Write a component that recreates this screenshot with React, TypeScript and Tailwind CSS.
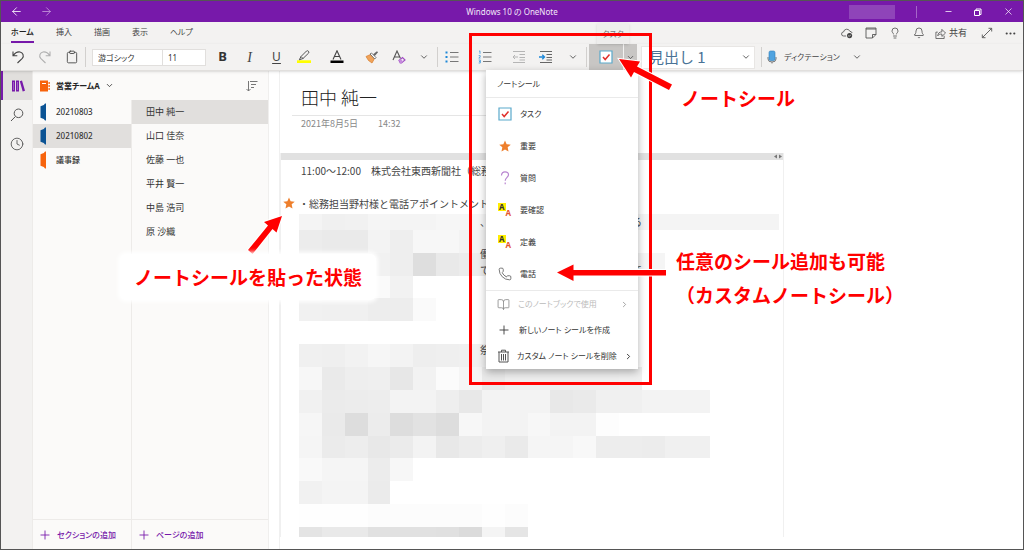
import React, { useState } from "react";
import {
  ArrowLeft,
  ArrowRight,
  Bell,
  BookOpen,
  ChevronDown,
  ChevronRight,
  Clipboard,
  Clock,
  Lightbulb,
  Minus,
  MoreHorizontal,
  Phone,
  Plus,
  X,
} from "lucide-react";

const TABS = ["ホーム", "挿入", "描画", "表示", "ヘルプ"];

const SECTIONS = [
  { name: "20210803", color: "text-[#0b5394]" },
  { name: "20210802", color: "text-[#0b5394]" },
  { name: "議事録", color: "text-[#f7630c]" },
];

const PAGES = ["田中 純一", "山口 佳奈", "佐藤 一也", "平井 賢一", "中島 浩司", "原 沙織"];

// Gray level of each mosaic cell, two hex digits per cell
const MOSAIC = [
  "f4 f0 f1 f5 f4 f4 f6 f6 f6 f6 f6 f6 f6 f6 f6 f4 f4 f4 f4 f4 f4",
  "ec ea ea f3 ee f7 f7 f3 f3",
  "f4 f4 f4 f1 ee de e9 ec ec ff ff ff ff ff f5 f5",
  "f6 f6 f6 fa f2",
  "f1 f0 f0 ed ed fa",
  "",
  "f0 ef f2 f6 f3 ee ef f0 f0",
  "f7 ea ee ef e7 f2 fb f5 e9 ee ee ee ee ee ef",
  "f1 eb ec ed f3 f3 ee e8 f3 f3 f3 e8 ea f0 f0 f3 f3 f3",
  "f6 ea dd ec dd e2 dd f7 f3 f3 f7 f3 f3 fd",
  "f5 eb ed e8 eb f3 e8 ec ef ea f5 f5 f8 ed ed ec f0 f0",
  "f9 f5 f5 ec f7",
  "f1 f4 f4 eb",
  "fe fe fe fc fc fc fc fc fe fc",
];
const STRIP = "e4 e9 e9 e1 e1 e1 e0 db f4 e5";
const CELL = 22.85;

function UndoIcon({ flip = false }: { flip?: boolean }) {
  return (
    <svg
      viewBox="0 0 14 14"
      className={flip ? "w-[14px] h-[14px] -scale-x-100" : "w-[14px] h-[14px]"}
      fill="none"
      stroke="currentColor"
      strokeWidth="1.1"
    >
      <path d="M2 1.5v4.3h4.3M2.2 5.6C4 3 6.5 1.6 9 2c3 .5 4.300 4 2.300 6.300L6.500 13" />
    </svg>
  );
}

function ListIcon({ numbered = false }: { numbered?: boolean }) {
  return (
    <svg viewBox="0 0 14 14" className="w-[14px] h-[14px]" fill="none">
      <path d="M5 2.500h8.500M5 7h8.500M5 11.500h8.500" stroke="#777" />
      {numbered ? (
        <path d="M1 1.500l1-.7v3M.7 5.600h1.500v1.200L.8 8h1.700M.7 10h1.600v3H.7M1 11.500h1.300" stroke="#4a9fe0" strokeWidth=".9" />
      ) : (
        <path d="M.5 1.500h2v2h-2zM.5 6h2v2h-2zM.5 10.500h2v2h-2z" fill="#1e88d8" />
      )}
    </svg>
  );
}

function IndentIcon({ out = false }: { out?: boolean }) {
  return (
    <svg viewBox="0 0 14 14" className="w-[14px] h-[14px]" fill="none">
      <path d="M1 1.500h12M7.500 4.500H13M7.500 7.500H13M7.500 10H13M1 12.500h12" stroke={out ? "#b5b5b5" : "#666"} />
      {out ? (
        <path d="M6 7H1M3 5L1 7l2 2" stroke="#b5b5b5" />
      ) : (
        <path d="M0 7h5.500M3.300 4.800L5.500 7 3.300 9.200" stroke="#1e88d8" strokeWidth="1.300" />
      )}
    </svg>
  );
}

function HighlighterIcon() {
  return (
    <svg viewBox="0 0 14 14" className="w-[14px] h-[14px]" fill="none">
      <path d="M0 10.300h14V13H0z" fill="#ff0" />
      <path d="M4 6.500L9.500 1q1-.7 1.900.2t.2 1.900L6 8.500 2.300 9.800zM4 6.500l2 2" stroke="#555" />
    </svg>
  );
}

function FontColorIcon() {
  return (
    <svg viewBox="0 0 14 14" className="w-[14px] h-[14px]" fill="none">
      <path d="M3 9.500L7 .8l4 8.700M4.500 6.500h5" stroke="#444" strokeWidth="1.100" />
      <path d="M.5 10.500h13V13H.5z" fill="#000" />
    </svg>
  );
}

function PainterIcon() {
  return (
    <svg viewBox="0 0 14 14" className="w-[14px] h-[14px]" fill="none">
      <path d="M1 6.500l4.500-2 4 4L7 13 3.500 10.500z" fill="#f0a35a" stroke="#d67c2c" strokeWidth=".7" />
      <path d="M5 4l1.500-1L11 7.500 9.700 9z" fill="#fff" stroke="#555" strokeWidth=".8" />
      <path d="M8 4.500l3.500-3q1.500-.5 1.300 1L9.800 6z" fill="#666" />
    </svg>
  );
}

function ClearFormatIcon() {
  return (
    <svg viewBox="0 0 14 14" className="w-[14px] h-[14px]" fill="none">
      <path d="M1 10L5 1l3.500 7.500M2.500 7H8" stroke="#555" strokeWidth="1.100" />
      <path d="M7 10.500l3.500-3L13 10l-3.500 3H8.300z" stroke="#a14fc4" strokeWidth="1.200" />
      <path d="M7 10.500l1.700-1.400 2.500 2.500L9.500 13H8.300z" fill="#c58add" />
    </svg>
  );
}

function TaskIcon() {
  return (
    <svg viewBox="0 0 14 14" className="w-[14px] h-[14px]" fill="none">
      <path d="M1 1h12v12H1z" fill="#fff" stroke="#5aa9cb" strokeWidth="1.200" />
      <path d="M4 7l2.200 2.500L10.500 4.500" stroke="#e0302c" strokeWidth="1.500" />
    </svg>
  );
}

function StarIcon() {
  return (
    <svg viewBox="0 0 14 14" className="w-3 h-3 shrink-0">
      <path d="M7 .5l1.900 4.400 4.800.5-3.600 3.200 1 4.800L7 11l-4.100 2.400 1-4.800L.3 5.400l4.800-.5z" fill="#ee7f2c" />
    </svg>
  );
}

function QuestionIcon() {
  return (
    <svg viewBox="0 0 14 14" className="w-[14px] h-[14px]" fill="none" stroke="#b884d0" strokeWidth="1.200">
      <path d="M3.500 4.500C3.500 2 5 .8 7 .8s3.500 1.200 3.500 3c0 2.500-3.300 2.700-3.300 6M7.200 11.500V13.200" />
    </svg>
  );
}

function MarkIcon() {
  return (
    <span aria-hidden="true" className="flex h-[14px] font-bold text-[8px] leading-[8px]">
      <span className="self-start bg-[#ffee00] text-[#333] px-px">A</span>
      <span className="self-end text-[#e4572e]">A</span>
    </span>
  );
}

function TrashIcon() {
  return (
    <svg viewBox="0 0 13 14" className="w-[13px] h-[14px] shrink-0" fill="none" stroke="#555">
      <path d="M1 3h11M4.500 3V1.200h4V3M2 3v10h9V3M4.500 5v6.500M6.500 5v6.500M8.500 5v6.500" />
    </svg>
  );
}

function SearchIcon() {
  return (
    <svg viewBox="0 0 14 14" className="w-[14px] h-[14px]" fill="none" stroke="#555">
      <circle cx="8.500" cy="5.300" r="4.300" />
      <path d="M5.400 8.500L1 13" />
    </svg>
  );
}

function NotebooksIcon() {
  return (
    <svg viewBox="0 0 14 14" className="w-[14px] h-[14px]" fill="#7719aa">
      <path d="M1 1.500h3v11H1zM5 1.500h3v11H5zM8.800 2.200l2.200-.8 3 10.300-2.300.8z" />
      <path d="M2.500 3v8M6.500 3v8" stroke="#c9a3dd" strokeWidth=".5" />
    </svg>
  );
}

function NotebookIcon() {
  return (
    <svg viewBox="0 0 12 12" className="w-3 h-3" fill="#f7630c">
      <path d="M1 .5h8v11H1zM9.500 2h1.300v2H9.500zM9.500 5h1.300v2H9.500zM9.500 8h1.300v2H9.500z" />
      <path d="M3 3.500h4" stroke="#fff" />
    </svg>
  );
}

function SectionIcon() {
  return (
    <svg viewBox="0 0 6 18" className="w-[6px] h-[18px]" fill="currentColor">
      <path d="M6 .5v17H5L3.800 16 .5 14.800V3.200L3.800 2 5 .5z" />
    </svg>
  );
}

function SortIcon() {
  return (
    <svg viewBox="0 0 12 12" className="w-3 h-3" fill="none" stroke="#777">
      <path d="M2.500 1v10M.5 9l2 2 2-2M4 1.500h7.500M5 4.500h5M5 7.500h3" />
    </svg>
  );
}

function CloudIcon() {
  return (
    <svg viewBox="0 0 14 14" className="w-3 h-3" fill="none" stroke="#555">
      <path d="M6 10.500H3a2.300 2.300 0 010-4.700A3.800 3.800 0 0110.300 5q2.200.2 2.700 2" />
      <circle cx="10" cy="10" r="3" fill="#444" stroke="none" />
      <path d="M8.500 10l1.100 1 1.900-2" stroke="#fff" strokeWidth=".8" />
    </svg>
  );
}

function NoteIcon() {
  return (
    <svg viewBox="0 0 12 12" className="w-3 h-3" fill="none" stroke="#555" strokeWidth=".9">
      <path d="M1 1h10v6.500L7.500 11H1zM11 7.500H7.500V11" />
      <path d="M1 2h10" />
    </svg>
  );
}

function ShareIcon() {
  return (
    <svg viewBox="0 0 12 12" className="w-[11px] h-[11px]" fill="none" stroke="#555" strokeWidth=".9">
      <path d="M3 4.500H1v7h9V8.500M3 8.500c.3-3 2-4.300 4.500-4.300V1.500l4 4-4 3.700V6.600C5.500 6.600 4 7 3 8.500z" />
    </svg>
  );
}

function ExpandIcon() {
  return (
    <svg viewBox="0 0 12 12" className="w-3 h-3" fill="none" stroke="#555" strokeWidth=".9">
      <path d="M1.500 10.500l9-9M7.500 1.300h3.200v3.200M1.300 7.500v3.200h3.200" />
    </svg>
  );
}

function MicIcon() {
  return (
    <svg viewBox="0 0 10 14" className="w-[10px] h-[14px]" fill="none">
      <path d="M1 7v2q0 3 4 3t4-3V7M5 12v1.500" stroke="#777" />
      <rect x="2" y="1" width="6" height="9.500" rx="1.500" fill="#4fa3e0" stroke="#2b7cb8" strokeWidth=".6" />
    </svg>
  );
}

function Mosaic() {
  return (
    <svg width="480" height="323" viewBox="0 7 480 323" className="block" aria-hidden="true">
      {MOSAIC.map((row, y) =>
        row
          .split(" ")
          .filter(Boolean)
          .map((g, x) => (
            <rect
              key={`${x}-${y}`}
              x={x * CELL}
              y={y * CELL}
              width={CELL}
              height={CELL}
              fill={`#${g}${g}${g}`}
              shapeRendering="crispEdges"
            />
          ))
      )}
      {STRIP.split(" ").map((g, x) => (
        <rect key={x} x={x * CELL} y="320" width={CELL} height="10" fill={`#${g}${g}${g}`} shapeRendering="crispEdges" />
      ))}
    </svg>
  );
}

function Divider() {
  return <span className="w-px h-5 bg-[#d2d0ce] shrink-0"></span>;
}

interface ToolProps {
  label: string;
  width?: string;
  children: React.ReactNode;
}

function Tool({ label, width = "w-[27px]", children }: ToolProps) {
  return (
    <button
      type="button"
      aria-label={label}
      className={`${width} h-full flex items-center justify-center shrink-0 text-[#444]`}
    >
      {children}
    </button>
  );
}

function TitleBar() {
  return (
    <header className="flex items-center justify-between h-[21px] shrink-0 bg-[#7719aa] text-white">
      <div className="flex flex-1 items-center">
        <button type="button" aria-label="戻る" className="w-[30px] flex justify-center">
          <ArrowLeft size={13} strokeWidth={1.5} />
        </button>
        <button type="button" aria-label="進む" className="w-[30px] flex justify-center text-[#c79bdd]">
          <ArrowRight size={13} strokeWidth={1.5} />
        </button>
      </div>
      <h1 className="text-[8px] leading-3 text-[#f3e8f8]">Windows 10 の OneNote</h1>
      <div className="flex flex-1 items-center justify-end">
        <span className="w-[46px] h-[14px] bg-[#8f44b9] mr-[21px]"></span>
        <span className="w-px h-3 bg-[#a566c8] mr-4"></span>
        <button type="button" aria-label="最小化" className="w-[30px] flex justify-center">
          <Minus size={9} strokeWidth={2} />
        </button>
        <button type="button" aria-label="元に戻す" className="w-[30px] flex justify-center">
          <svg viewBox="0 0 8 8" className="w-2 h-2" fill="none" stroke="white">
            <path d="M.5 2.500h5v5h-5zM2 2.500V1h5v5.500H5.500" />
          </svg>
        </button>
        <button type="button" aria-label="閉じる" className="w-[30px] flex justify-center">
          <X size={11} strokeWidth={1.5} />
        </button>
      </div>
    </header>
  );
}

function TabBar() {
  return (
    <nav className="flex items-center justify-between h-[22px] shrink-0 pl-[10px] pr-1 bg-[#f3f2f1] text-[8px] text-[#444]">
      <div className="flex h-full gap-[22px]">
        {TABS.map((tab, i) => (
          <button
            key={tab}
            type="button"
            className={
              i === 0
                ? "h-[21px] border-b-2 border-[#7719aa] font-medium text-[#222]"
                : "h-[21px] border-b-2 border-transparent"
            }
          >
            {tab}
          </button>
        ))}
      </div>
      <div className="flex items-center h-full">
        <Tool label="同期" width="w-6">
          <CloudIcon />
        </Tool>
        <Tool label="フィード" width="w-6">
          <NoteIcon />
        </Tool>
        <Tool label="ヒント" width="w-6">
          <Lightbulb size={12} strokeWidth={1.5} />
        </Tool>
        <Tool label="通知" width="w-6">
          <Bell size={12} strokeWidth={1.5} />
        </Tool>
        <button type="button" className="flex items-center gap-[3px] pl-1 pr-[14px] text-[9px]">
          <ShareIcon />
          共有
        </button>
        <Tool label="全画面表示" width="w-3">
          <ExpandIcon />
        </Tool>
        <span className="w-2"></span>
        <Tool label="その他" width="w-[18px]">
          <MoreHorizontal size={13} strokeWidth={2} />
        </Tool>
      </div>
    </nav>
  );
}

function Ribbon() {
  const [font, setFont] = useState("游ゴシック");
  const [size, setSize] = useState("11");

  return (
    <div className="relative flex items-center h-[27px] shrink-0 pl-[3px] bg-[#f3f2f1] border-b border-[#e1dfdd] shadow-sm">
      <Tool label="元に戻す">
        <UndoIcon />
      </Tool>
      <Tool label="やり直し">
        <span className="text-[#b0b0b0]">
          <UndoIcon flip />
        </span>
      </Tool>
      <Tool label="貼り付け">
        <Clipboard size={14} strokeWidth={1.5} />
      </Tool>
      <Divider />
      <input
        aria-label="フォント"
        value={font}
        onChange={(e) => setFont(e.target.value)}
        className="w-[71px] h-[17px] ml-[6px] px-[5px] bg-white border border-[#e1dfdd] text-[8px] text-[#333]"
      />
      <input
        aria-label="フォント サイズ"
        value={size}
        onChange={(e) => setSize(e.target.value)}
        className="w-[43px] h-[17px] mr-[3px] px-[5px] bg-white border border-l-0 border-[#e1dfdd] text-[8px] text-[#333]"
      />
      <Tool label="太字">
        <span className="text-[13px] font-bold text-[#333]">B</span>
      </Tool>
      <Tool label="斜体">
        <span className="font-['Liberation_Serif',serif] text-[14px] italic">I</span>
      </Tool>
      <Tool label="下線">
        <span className="text-[12px] underline underline-offset-2">U</span>
      </Tool>
      <Tool label="蛍光ペン">
        <HighlighterIcon />
      </Tool>
      <Tool label="フォントの色" width="w-10">
        <FontColorIcon />
      </Tool>
      <Tool label="書式のコピー" width="w-[29px]">
        <PainterIcon />
      </Tool>
      <Tool label="書式のクリア" width="w-[25px]">
        <ClearFormatIcon />
      </Tool>
      <Tool label="その他のフォント設定" width="w-[26px]">
        <ChevronDown size={10} strokeWidth={2} />
      </Tool>
      <Divider />
      <Tool label="箇条書き">
        <ListIcon />
      </Tool>
      <Tool label="段落番号" width="w-10">
        <ListIcon numbered />
      </Tool>
      <Tool label="インデントを減らす">
        <IndentIcon out />
      </Tool>
      <Tool label="インデントを増やす">
        <IndentIcon />
      </Tool>
      <Tool label="その他の段落設定">
        <ChevronDown size={10} strokeWidth={2} />
      </Tool>
      <Divider />
      <div className="flex h-full ml-[2px] bg-[#c8c6c4]">
        <Tool label="タスク" width="w-[34px]">
          <TaskIcon />
        </Tool>
        <span className="w-px bg-[#f3f2f1]"></span>
        <Tool label="ノート シールの一覧" width="w-[13px]">
          <ChevronDown size={9} strokeWidth={2} />
        </Tool>
      </div>
      <div className="relative flex items-center ml-1 mr-[6px]">
        <select
          aria-label="見出しスタイル"
          className="w-[114px] h-[23px] pl-[7px] appearance-none bg-white border border-[#e8e6e4] font-['Noto_Sans_CJK_JP',sans-serif] text-[15px] leading-5 text-[#4a7396] [font-feature-settings:normal]"
        >
          <option>見出し 1</option>
        </select>
        <ChevronDown size={10} strokeWidth={2} className="absolute right-1 text-[#444] pointer-events-none" />
      </div>
      <Divider />
      <button type="button" className="flex items-center gap-[7px] h-full pl-[5px] pr-[12px] text-[8px] text-[#444]">
        <MicIcon />
        ディクテーション
      </button>
      <ChevronDown size={10} strokeWidth={2} className="text-[#444]" />
    </div>
  );
}

function NavRail() {
  return (
    <aside className="flex flex-col w-8 shrink-0 bg-[#f3f2f1] border-r border-[#edebe9] text-[#555]">
      <button
        type="button"
        aria-label="ノートブック"
        className="flex items-center justify-center h-[29px] bg-[#e1dfdd] border-l-2 border-[#7719aa]"
      >
        <NotebooksIcon />
      </button>
      <button type="button" aria-label="検索" className="flex items-center justify-center h-[29px]">
        <SearchIcon />
      </button>
      <button type="button" aria-label="最近使ったノート" className="flex items-center justify-center h-[29px]">
        <Clock size={14} strokeWidth={1.5} />
      </button>
    </aside>
  );
}

function NotebookPane() {
  const [section, setSection] = useState(1);
  const [page, setPage] = useState(0);

  return (
    <div className="flex flex-col w-[236px] shrink-0 bg-[#fbfaf9] border-r border-[#f0efee] text-[#333]">
      <div className="flex items-center justify-between h-[29px] shrink-0 pl-[6px] pr-[10px]">
        <button type="button" className="flex items-center gap-[5px] text-[8px] font-bold text-[#222]">
          <NotebookIcon />
          <span>営業チームA</span>
          <ChevronDown size={9} strokeWidth={2} />
        </button>
        <button type="button" aria-label="並べ替え">
          <SortIcon />
        </button>
      </div>
      <div className="flex flex-1 min-h-0">
        <div className="flex flex-col w-[99px] border-r border-[#edebe9]">
          {SECTIONS.map((s, i) => (
            <button
              key={s.name}
              type="button"
              onClick={() => setSection(i)}
              className={
                i === section
                  ? "flex items-center gap-[10px] h-6 pl-[7px] bg-[#e1dfdd] text-[8px] font-medium"
                  : "flex items-center gap-[10px] h-6 pl-[7px] text-[8px] font-medium"
              }
            >
              <span className={s.color}>
                <SectionIcon />
              </span>
              {s.name}
            </button>
          ))}
          <button
            type="button"
            className="flex items-center gap-[5px] h-[30px] mt-auto pl-[5px] border-t border-[#edebe9] text-[8px] font-medium text-[#7719aa]"
          >
            <Plus size={14} strokeWidth={1.5} />
            セクションの追加
          </button>
        </div>
        <div className="flex flex-col flex-1">
          {PAGES.map((p, i) => (
            <button
              key={p}
              type="button"
              onClick={() => setPage(i)}
              className={
                i === page
                  ? "h-6 pl-[14px] bg-[#e1dfdd] text-left text-[9px]"
                  : "h-6 pl-[14px] text-left text-[9px]"
              }
            >
              {p}
            </button>
          ))}
          <button
            type="button"
            className="flex items-center gap-[5px] h-[30px] mt-auto pl-[5px] border-t border-[#edebe9] text-[8px] font-medium text-[#7719aa]"
          >
            <Plus size={14} strokeWidth={1.5} />
            ページの追加
          </button>
        </div>
      </div>
    </div>
  );
}

// What is left of a redacted line on both sides of the open menu
function LineEnds({ start, end }: { start: string; end?: string }) {
  return (
    <p className="flex justify-between h-4">
      <span>{start}</span>
      <span>{end}</span>
    </p>
  );
}

function PageCanvas() {
  return (
    <main className="flex-1 min-w-0 ml-[10px] border-l border-[#f0f0f0] bg-white font-['Noto_Sans_CJK_JP',sans-serif] text-[#444] overflow-hidden [font-feature-settings:normal]">
      <div className="w-[300px] h-[45px] ml-3 pl-[9px] pt-[14px] border-b border-[#e5e5e5]">
        <h2 className="text-[18px] leading-6 font-light text-[#222]">田中 純一</h2>
      </div>
      <div className="flex gap-5 h-[37px] pl-[21px] text-[9px] leading-4 text-[#888]">
        <span>2021年8月5日</span>
        <span>14:32</span>
      </div>
      <div className="w-[504px] border-x border-[#f0f0f0] text-[10px]">
        <div className="flex items-center justify-end gap-px h-[7px] bg-[#e1e1e1] text-[#777]">
          <svg viewBox="0 0 10 5" className="w-[10px] h-[5px]" fill="currentColor">
            <path d="M4 .5v4L1 2.500zM6 .5v4l3-2z" />
          </svg>
        </div>
        <p className="h-[22px] pl-5 leading-[22px] whitespace-nowrap">11:00～12:00　株式会社東西新聞社（総務部）</p>
        <div className="flex items-center gap-1 h-[22px] mt-[10px] pl-[2px] whitespace-nowrap">
          <StarIcon />
          <p>・総務担当野村様と電話アポイントメント</p>
        </div>
        <div className="relative pl-[18px]">
          <Mosaic />
          <div className="absolute left-[199px] top-0 w-[162px] leading-4">
            <LineEnds start="、" end="る" />
            <LineEnds start="" />
            <LineEnds start="働" />
            <LineEnds start="て" end="て" />
          </div>
          <div className="absolute left-[199px] top-32 w-[162px] leading-4">
            <LineEnds start="祭" />
          </div>
        </div>
      </div>
    </main>
  );
}

const TAGS = [
  { label: "タスク", icon: <TaskIcon /> },
  { label: "重要", icon: <StarIcon /> },
  { label: "質問", icon: <QuestionIcon /> },
  { label: "要確認", icon: <MarkIcon /> },
  { label: "定義", icon: <MarkIcon /> },
  { label: "電話", icon: <Phone size={14} strokeWidth={1.5} className="text-[#666]" /> },
];

function TagMenu() {
  return (
    <div
      role="menu"
      aria-label="ノートシール"
      className="absolute left-[485px] top-[69px] w-[152px] bg-white shadow-[0_3px_8px_rgba(0,0,0,0.3)] text-[8px] text-[#333]"
    >
      <p className="h-7 pl-[11px] border-b border-[#eaeaea] leading-[27px]">ノートシール</p>
      {TAGS.map((tag) => (
        <button
          key={tag.label}
          type="button"
          role="menuitem"
          className="flex items-center gap-2 w-full h-8 pl-[11px]"
        >
          <span className="flex items-center justify-center w-[15px]">{tag.icon}</span>
          {tag.label}
        </button>
      ))}
      <div className="border-t border-[#eaeaea]">
        <button
          type="button"
          role="menuitem"
          disabled
          className="flex items-center gap-2 w-full h-[26px] pl-[11px] pr-[9px] text-[#bbb]"
        >
          <BookOpen size={13} strokeWidth={1.5} className="shrink-0 text-[#888]" />
          <span className="flex-1 text-left">このノートブックで使用</span>
          <ChevronRight size={9} strokeWidth={2} className="shrink-0 text-[#888]" />
        </button>
        <button type="button" role="menuitem" className="flex items-center gap-2 w-full h-[26px] pl-[11px]">
          <Plus size={14} strokeWidth={1.5} className="shrink-0" />
          新しいノート シールを作成
        </button>
        <button type="button" role="menuitem" className="flex items-center gap-[7px] w-full h-[26px] pl-[11px] pr-[9px]">
          <TrashIcon />
          <span className="flex-1 text-left whitespace-nowrap">カスタム ノート シールを削除</span>
          <ChevronRight size={9} strokeWidth={2.5} className="shrink-0" />
        </button>
      </div>
    </div>
  );
}

function Annotations() {
  return (
    <div className="absolute -inset-px pointer-events-none font-['Noto_Sans_CJK_JP',sans-serif] text-[19px] leading-[34px] font-bold text-[#ff0000] whitespace-nowrap [font-feature-settings:normal]">
      <div className="absolute left-[469px] top-[33px] w-[183px] h-[352px] border-3 border-[#ff0000]"></div>

      <svg className="absolute left-[610px] top-[52px]" width="70" height="44" viewBox="610 52 70 44">
        <path
          d="M619 59L640 61.500 637 66.500 672 84.500 669 90 634 72 631 77.500z"
          fill="#ff0000"
          stroke="#fff"
          strokeWidth="2"
          paintOrder="stroke"
        />
      </svg>
      <p className="absolute left-[681px] top-[81px]">ノートシール</p>

      <svg className="absolute left-[550px] top-[260px]" width="120" height="26" viewBox="550 260 120 26">
        <path
          d="M557 272.500L573.500 264.500V270H666V275.500H573.500V281z"
          fill="#ff0000"
          stroke="#fff"
          strokeWidth="2"
          paintOrder="stroke"
        />
      </svg>
      <div className="absolute left-[676px] top-[244px]">
        <p>任意のシール追加も可能</p>
        <p>（カスタムノートシール）</p>
      </div>

      <svg className="absolute left-[242px] top-[210px]" width="46" height="46" viewBox="242 210 46 46">
        <path
          d="M282 216L276.500 232.500 272.500 229 252.500 254 248 250 268 225.500 264 222z"
          fill="#ff0000"
          stroke="#fff"
          strokeWidth="2"
          paintOrder="stroke"
        />
      </svg>
      <p className="absolute left-[120px] top-[254px] px-[14px] py-[6px] rounded-md bg-white shadow-[0_0_4px_2px_white]">
        ノートシールを貼った状態
      </p>
    </div>
  );
}

export default function App() {
  return (
    <div
      lang="ja"
      className="relative flex flex-col h-screen overflow-hidden border border-[#555] bg-white font-['Noto_Sans','Noto_Sans_CJK_JP',sans-serif] [font-feature-settings:'palt']"
    >
      <TitleBar />
      <TabBar />
      <Ribbon />
      <div className="flex flex-1 min-h-0">
        <NavRail />
        <NotebookPane />
        <PageCanvas />
      </div>
      <span
        role="tooltip"
        className="absolute left-[596px] top-[22px] w-8 h-[21px] bg-[#eeedec] shadow text-center text-[8px] leading-[22px] text-[#777]"
      >
        タスク
      </span>
      <TagMenu />
      <Annotations />
    </div>
  );
}
